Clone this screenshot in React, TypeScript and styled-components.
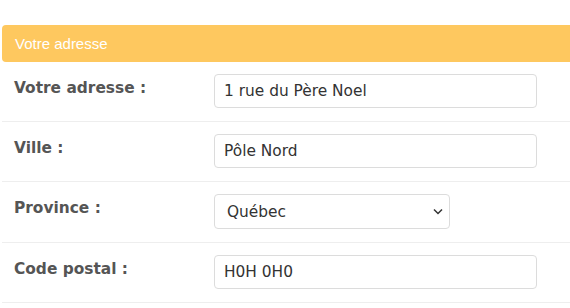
import React from "react";
import styled, { createGlobalStyle } from "styled-components";

const GlobalStyle = createGlobalStyle`
  html, body {
    margin: 0;
    padding: 0;
    background: #fff;
    overflow: hidden;
  }
  body {
    font-family: "DejaVu Sans", Verdana, sans-serif;
  }
`;

const Card = styled.section`
  margin: 25px -6px 0 2px;
`;

const Header = styled.div`
  height: 37px;
  display: flex;
  align-items: center;
  padding-left: 13px;
  background: #fec85f;
  border-radius: 4px;
  color: #fff;
  font-family: "Liberation Sans", Arial, sans-serif;
  font-size: 15px;
`;

const Row = styled.div`
  display: grid;
  grid-template-columns: 200px 1fr;
  align-items: start;
  padding: 12px 0 13px 12px;
  border-bottom: 1px solid #eeeeee;
`;

const Label = styled.label`
  padding-top: 5px;
  line-height: 18px;
  font-size: 15.4px;
  font-weight: bold;
  color: #555;
`;

const Input = styled.input<{ $width?: number }>`
  box-sizing: border-box;
  width: ${(p) => p.$width ?? 323}px;
  height: 34px;
  padding: 0 9px;
  border: 1px solid #dcdcdc;
  border-radius: 4px;
  font-family: "DejaVu Sans", Verdana, sans-serif;
  font-size: 15.4px;
  color: #333;
  background: #fff;
  outline: none;
`;

const SelectWrap = styled.div`
  position: relative;
  width: 236px;
`;

const Select = styled.select`
  box-sizing: border-box;
  width: 100%;
  height: 35px;
  padding: 0 30px 0 12px;
  border: 1px solid #dcdcdc;
  border-radius: 4px;
  font-family: "DejaVu Sans", Verdana, sans-serif;
  font-size: 15.4px;
  color: #333;
  background: #fff;
  appearance: none;
  outline: none;
`;

const Chevron = styled.svg`
  position: absolute;
  right: 7px;
  top: 14px;
  width: 10px;
  height: 7px;
  pointer-events: none;
`;

const App = () => {
  return (
    <>
      <GlobalStyle />
      <Card>
        <Header>Votre adresse</Header>

        <Row>
          <Label htmlFor="adresse">Votre adresse :</Label>
          <Input id="adresse" type="text" defaultValue="1 rue du Père Noel" />
        </Row>

        <Row>
          <Label htmlFor="ville">Ville :</Label>
          <Input id="ville" type="text" defaultValue="Pôle Nord" />
        </Row>

        <Row>
          <Label htmlFor="province">Province :</Label>
          <SelectWrap>
            <Select id="province" defaultValue="QC">
              <option value="QC">Québec</option>
              <option value="ON">Ontario</option>
            </Select>
            <Chevron viewBox="0 0 10 7">
              <path d="M1 1.5 L5 5.5 L9 1.5" fill="none" stroke="#333" strokeWidth="1.5" />
            </Chevron>
          </SelectWrap>
        </Row>

        <Row>
          <Label htmlFor="postal">Code postal :</Label>
          <Input id="postal" type="text" defaultValue="H0H 0H0" />
        </Row>
      </Card>
    </>
  );
};

export default App;
